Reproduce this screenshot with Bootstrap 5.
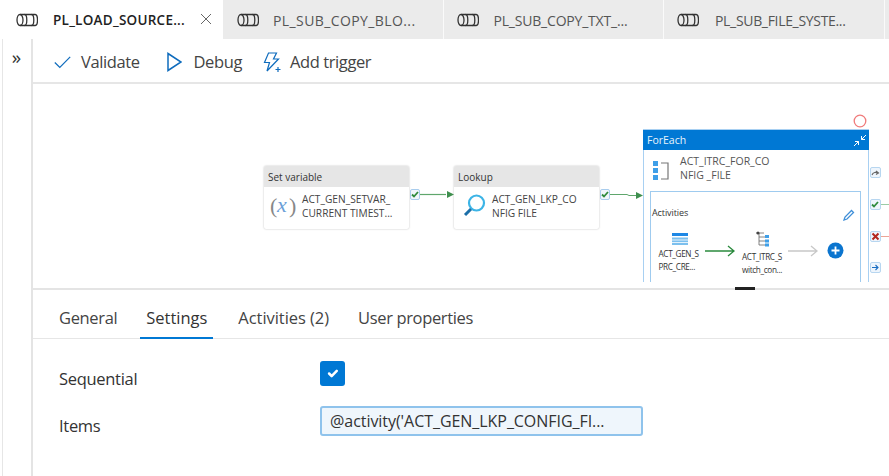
<!DOCTYPE html>
<html lang="en"><head><meta charset="utf-8"><title>Pipeline</title>
<link href="https://cdn.jsdelivr.net/npm/bootstrap@5.3.0/dist/css/bootstrap.min.css" rel="stylesheet">
<style>
html,body{width:889px;height:476px;overflow:hidden;background:#fff}
body{font-family:"Open Sans","Noto Sans",sans-serif;color:#333;position:relative}
.tabstrip{height:39px;background:#ebebeb}
.ptab{width:220.5px;height:39px;padding-left:13px;padding-top:1px;gap:15px;font-size:14px;color:#555;border-right:1px solid #fafafa;white-space:nowrap}
.ptab:nth-child(2){letter-spacing:.4px;padding-left:14px;gap:14px}
.ptab:nth-child(3){letter-spacing:-.2px}
.ptab:nth-child(4){letter-spacing:-.32px;gap:16px}
.ptab.on{width:223px;background:#fff;color:#222;font-weight:600;font-size:13.5px;letter-spacing:.25px;border-right:0;position:relative;padding-left:16px;gap:15px}
.closex{position:absolute;left:200px;top:13px}
.mainrow{height:437px}
.rail{width:31px;margin-left:2px;border-left:1px solid #e6e6e6;border-right:2px solid #e4e4e4;text-align:center;font-size:19px;line-height:36px;color:#333;flex:none;padding-right:1px}
.toolbar{height:45px;border-bottom:2px solid #e6e6e6;padding-left:21px;padding-top:3px}
.toolitem{font-size:16.5px;color:#444;letter-spacing:-.4px;line-height:1}
.toolitem:nth-child(1){gap:10px;margin-right:27px}
.toolitem:nth-child(2){gap:12px;margin-right:21px}
.toolitem:nth-child(3){gap:9px}
.canvasarea{height:204px;position:relative;overflow:hidden}
.canvasclip{position:absolute;left:0;right:0;top:0;height:198px;overflow:hidden}
.node{position:absolute;background:#fff;border-radius:2px;box-shadow:0 0 2px rgba(0,0,0,.28);width:145px;height:63px;top:82px}
.nodehead{height:21px;background:#e6e6e6;font-size:10px;line-height:23px;padding-left:4px;color:#333;border-radius:2px 2px 0 0}
.nodename{position:absolute;left:38px;top:27px;font-size:10.2px;line-height:13.5px;color:#444;white-space:nowrap}
.okbox{position:absolute;width:10px;height:11px;background:#f0f6fc;border:1px solid #a9cdee;border-radius:2px;z-index:2}
.wire{position:absolute;z-index:1}
.fe{position:absolute;left:610px;top:45px;width:226px;height:200px;border:1.500px solid #a8d0f2;background:#fff}
.fehead{height:20px;background:#0078d4;color:#e8f3fc;font-size:10.5px;line-height:20px;padding-left:4px;position:relative;margin:0 -1px}
.fename{position:absolute;left:36px;top:25px;font-size:10.5px;line-height:13.5px;color:#555;white-space:nowrap}
.feinner{position:absolute;left:6px;top:61px;width:211px;height:130px;border:1.500px solid #9fcbef}
.acttitle{position:absolute;left:1px;top:14px;font-size:9px;color:#333;letter-spacing:-.1px}
.actname{position:absolute;font-size:8.2px;line-height:12.5px;color:#333;letter-spacing:-.35px;white-space:nowrap}
.abs{position:absolute}
.sideic{position:absolute;width:11px;height:11px;background:#eef5fc;border:1px solid #b7d6f0;border-radius:2px;z-index:2}
.splitter{height:2px;background:#e4e4e4;position:relative}
.grip{position:absolute;left:702px;top:-1px;width:20px;height:3px;background:#222}
.dtabs{height:49px;border-bottom:1px solid #e6e6e6;padding-left:18px}
.dtab{font-size:16.5px;line-height:1;color:#444;padding:20px 8px 0;height:48px;letter-spacing:-.35px;white-space:nowrap}
.dtab:nth-child(1){margin-right:15px}
.dtab.on{color:#333;border-bottom:2px solid #0078d4;padding-left:6px;padding-right:6px;margin-right:17px;height:49px;letter-spacing:-.02px}
.dtab:nth-child(3){letter-spacing:-.05px;margin-right:13px}
.flabel{width:287px;padding-left:26px;font-size:16.5px;color:#333;letter-spacing:-.3px;flex:none}
.seqrow{height:25px;margin-top:22px}
.seqrow .flabel{padding-top:12px}
.itemrow{height:30px;margin-top:20px}
.itemrow .flabel{padding-top:10px}
.form-check-input.seqcheck{width:25px;height:25px;margin:0;background-color:#0078d4;border:0;border-radius:3px;background-size:17px}
.form-control.itemsinp{width:323px;height:30px;padding:0 8px;border:2px solid #8fc3ec;border-radius:3px;background:#eff6fc;font-size:16px;letter-spacing:-.05px;color:#333;font-family:inherit;box-shadow:none}
</style></head><body>
<svg width="0" height="0" class="abs"><defs>
<g id="pipeic" fill="none" stroke="#333" stroke-width="1.300"><path d="M4 1.500h15c1.500 0 2.500 2.500 2.500 5.500s-1 5.500-2.500 5.500H4"/><ellipse cx="4" cy="7" rx="3" ry="5.500"/><path d="M8.500 1.500c1.500 0 2.300 2.500 2.300 5.500s-.8 5.500-2.300 5.500M15.500 1.500c1.500 0 2.300 2.500 2.300 5.500s-.8 5.500-2.300 5.500"/></g>
<g id="okic"><path d="M2 5.500l2 2 4-4.500" fill="none" stroke="#2e8b3d" stroke-width="1.800"/></g>
</defs></svg>
<div class="tabstrip d-flex">
  <div class="ptab on d-flex align-items-center"><svg width="22" height="14"><use href="#pipeic"/></svg><span>PL_LOAD_SOURCE...</span>
    <svg class="closex" width="12" height="12"><path d="M1 1l10 10M11 1L1 11" stroke="#666" stroke-width="1"/></svg></div>
  <div class="ptab d-flex align-items-center"><svg width="22" height="14"><use href="#pipeic"/></svg><span>PL_SUB_COPY_BLO...</span></div>
  <div class="ptab d-flex align-items-center"><svg width="22" height="14"><use href="#pipeic"/></svg><span>PL_SUB_COPY_TXT_...</span></div>
  <div class="ptab d-flex align-items-center"><svg width="22" height="14"><use href="#pipeic"/></svg><span>PL_SUB_FILE_SYSTE...</span></div>
</div>
<div class="mainrow d-flex">
  <div class="rail">»</div>
  <div class="flex-grow-1">
    <div class="toolbar d-flex align-items-center">
      <div class="toolitem d-flex align-items-center"><svg width="17" height="13"><path d="M.8 6.500l5 5L16.200 .8" fill="none" stroke="#0f6cbd" stroke-width="1.200"/></svg>Validate</div>
      <div class="toolitem d-flex align-items-center"><svg width="15" height="20"><path d="M1 1.500L14 10 1 18.500z" fill="none" stroke="#0f6cbd" stroke-width="1.500"/></svg>Debug</div>
      <div class="toolitem d-flex align-items-center"><svg width="18" height="21"><path d="M5.500 1h8l-3 6h5L4 19l2.500-8.500H1.500z" fill="none" stroke="#0f6cbd" stroke-width="1.200"/><path d="M12.500 17.500h5M15 15v5" stroke="#0f6cbd" stroke-width="1.200"/></svg>Add trigger</div>
    </div>
    <div class="canvasarea">
      <div class="canvasclip">
        <div class="node" style="left:231px"><div class="nodehead">Set variable</div>
          <svg class="abs" style="left:6px;top:27px" width="28" height="26"><text x="0" y="20" font-family="Liberation Serif" font-size="22" fill="#888">(</text><text x="7" y="19" font-family="Liberation Serif" font-style="italic" font-size="22" fill="#6b9fd8">x</text><text x="19" y="20" font-family="Liberation Serif" font-size="22" fill="#888">)</text></svg>
          <div class="nodename">ACT_GEN_SETVAR_<br>CURRENT TIMEST...</div></div>
        <div class="okbox" style="left:377px;top:105px"><svg class="abs" style="left:-1px;top:-1px" width="11" height="11"><use href="#okic"/></svg></div>
        <svg class="wire" style="left:387px;top:105px" width="36" height="12"><path d="M0 5.500h26" stroke="#5fa66c" stroke-width="1.200"/><path d="M34 5.500L27 2v7z" fill="#3f8f4f"/></svg>
        <div class="node" style="left:421px"><div class="nodehead">Lookup</div>
          <svg class="abs" style="left:9px;top:27px" width="26" height="26"><circle cx="13.500" cy="10" r="7.500" fill="none" stroke="#3cb4e6" stroke-width="2.200"/><path d="M8 16l-6 6" stroke="#1b6ea8" stroke-width="3"/></svg>
          <div class="nodename">ACT_GEN_LKP_CO<br>NFIG FILE</div></div>
        <div class="okbox" style="left:567px;top:105px"><svg class="abs" style="left:-1px;top:-1px" width="11" height="11"><use href="#okic"/></svg></div>
        <svg class="wire" style="left:577px;top:105px" width="34" height="12"><path d="M0 5.500h17l2 1h7" fill="none" stroke="#5fa66c" stroke-width="1"/><path d="M33 6.500L26 3v7z" fill="#3f8f4f"/></svg>
        <div class="fe">
          <div class="fehead">ForEach
            <svg class="abs" style="left:210px;top:4px" width="14" height="13"><path d="M13 1L8.500 5.500M8.500 2v3.500H12" fill="none" stroke="#fff" stroke-width="1"/><path d="M1 12l4.500-4.500M2 7.500h3.500V11" fill="none" stroke="#fff" stroke-width="1"/></svg></div>
          <svg class="abs" style="left:8px;top:29px" width="18" height="22"><rect x="1" y="2" width="5" height="5" fill="#3f9fe8"/><rect x="1" y="9" width="5" height="5" fill="#3f9fe8"/><rect x="1" y="16" width="5" height="5" fill="#3f9fe8"/><path d="M9 4h7v16H9" fill="none" stroke="#777" stroke-width="1.200"/></svg>
          <div class="fename">ACT_ITRC_FOR_CO<br>NFIG _FILE</div>
          <div class="feinner">
            <div class="acttitle">Activities</div>
            <svg class="abs" style="left:192px;top:17px" width="12" height="12"><path d="M1 11l1-3 6.500-6.500 2 2L4 10z" fill="none" stroke="#3f8fd8" stroke-width="1.300"/></svg>
            <svg class="abs" style="left:20px;top:40px" width="18" height="14"><rect x="1" y="1" width="16" height="3" fill="#1e88e5"/><rect x="1" y="5.500" width="16" height="7.500" fill="#7cc0ee"/><path d="M1 8h16M1 10.500h16" stroke="#fff" stroke-width=".8"/></svg>
            <div class="actname" style="left:7.500px;top:56px">ACT_GEN_S<br>PRC_CRE...</div>
            <svg class="abs" style="left:53px;top:53px" width="32" height="12"><path d="M1 6h29M24 1l6 5-6 5" fill="none" stroke="#2b8a3e" stroke-width="1.300"/></svg>
            <svg class="abs" style="left:104px;top:39px" width="16" height="16"><path d="M4 2v12M4 6h6M4 10h6M4 14h6M1 2h8" fill="none" stroke="#666" stroke-width=".8"/><circle cx="3" cy="2" r="1.500" fill="#444"/><rect x="10" y="4" width="4" height="3" fill="#3f9fe8"/><rect x="10" y="8.500" width="4" height="3" fill="#3f9fe8"/><rect x="10" y="12.500" width="4" height="3" fill="#3f9fe8"/></svg>
            <div class="actname" style="left:91px;top:59px">ACT_ITRC_S<br>witch_con...</div>
            <svg class="abs" style="left:136px;top:53px" width="32" height="12"><path d="M1 6h29M24 1l6 5-6 5" fill="none" stroke="#c8c8c8" stroke-width="1.300"/></svg>
            <svg class="abs" style="left:176px;top:50px" width="17" height="17"><circle cx="8.500" cy="8.500" r="8" fill="#0b75cf"/><path d="M8.500 4.500v8M4.500 8.500h8" stroke="#fff" stroke-width="1.800"/></svg>
          </div>
        </div>
        <svg class="abs" style="left:819.500px;top:30px" width="14" height="14"><circle cx="7" cy="7" r="5.800" fill="none" stroke="#f07b7b" stroke-width="1.300"/></svg>
        <div class="sideic" style="left:837px;top:83px"><svg class="abs" style="left:0;top:1px" width="9" height="8"><path d="M1 6c1-3 4-3 6-2M5 2l2.500 2L5 5.500" fill="none" stroke="#666" stroke-width="1.100"/></svg></div>
        <div class="sideic" style="left:837px;top:115px"><svg class="abs" style="left:-1px;top:-1px" width="11" height="11"><use href="#okic"/></svg></div>
        <div class="abs" style="left:848px;top:120px;width:8px;height:1px;background:#9ccca6"></div>
        <div class="sideic" style="left:837px;top:147px"><svg class="abs" style="left:0;top:0" width="9" height="9"><path d="M1.500 1.500l6 6M7.500 1.500l-6 6" stroke="#b3261e" stroke-width="2"/></svg></div>
        <div class="abs" style="left:848px;top:152px;width:8px;height:1px;background:#eda596"></div>
        <div class="sideic" style="left:837px;top:178px"><svg class="abs" style="left:0;top:0" width="9" height="9"><path d="M1 4.500h6M4.500 2l2.500 2.500L4.500 7" fill="none" stroke="#1b6ec2" stroke-width="1.100"/></svg></div>
      </div>
    </div>
    <div class="splitter"><div class="grip"></div></div>
    <nav class="dtabs d-flex">
      <div class="dtab">General</div><div class="dtab on">Settings</div><div class="dtab">Activities (2)</div><div class="dtab">User properties</div>
    </nav>
    <div class="fields">
      <div class="seqrow d-flex align-items-center">
        <div class="flabel">Sequential</div>
        <input class="form-check-input seqcheck" type="checkbox" checked aria-label="Sequential">
      </div>
      <div class="itemrow d-flex align-items-center">
        <div class="flabel">Items</div>
        <input class="form-control itemsinp" type="text" value="@activity('ACT_GEN_LKP_CONFIG_FI..." aria-label="Items">
      </div>
    </div>
  </div>
</div>
</body></html>
